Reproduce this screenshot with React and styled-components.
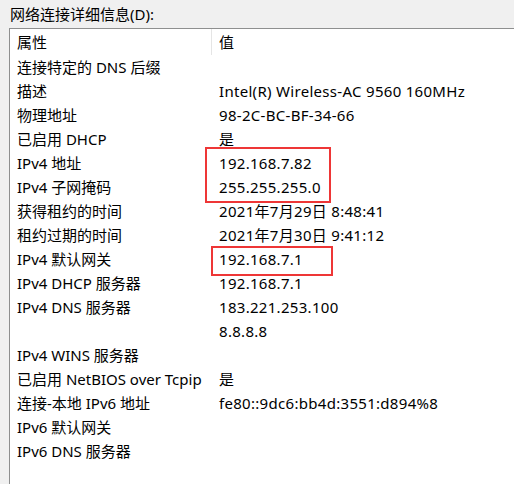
import React from "react";
import styled, { createGlobalStyle } from "styled-components";

const GlobalStyle = createGlobalStyle`
    html, body {
        margin: 0;
        padding: 0;
        background: #f0f0f0;
    }
    body {
        font-family: "Noto Sans", "Noto Sans CJK SC", sans-serif;
        font-size: 15px;
        color: #000;
    }
`;

const Window = styled.div`
    width: 514px;
    height: 484px;
    display: flex;
    flex-direction: column;
    overflow: hidden;
    background: #f0f0f0;
`;

const Caption = styled.div`
    height: 28px;
    padding-left: 10px;
    display: flex;
    align-items: center;
    line-height: 1;
`;

const ListBox = styled.div`
    flex: 1;
    margin-left: 9px;
    margin-right: -20px;
    border-left: 1px solid #8e8f8f;
    border-top: 1px solid #8e8f8f;
    background: #fff;
    position: relative;
`;

const Row = styled.div`
    display: grid;
    grid-template-columns: 202px 1fr;
    height: ${p => (p.$header ? "26px" : "24px")};
    align-items: center;
    white-space: nowrap;
`;

const Cell = styled.div`
    padding-left: 7px;
    line-height: 1;
    height: ${p => (p.$header ? "26px" : "auto")};
    display: flex;
    align-items: center;
    letter-spacing: ${p => (p.$value && !p.$header ? "0.3px" : "0")};
    border-right: ${p => (p.$header && !p.$value ? "1px solid #e5e5e5" : "none")};
    box-sizing: border-box;
`;

const Highlight = styled.div`
    position: absolute;
    border: 2px solid #ee3636;
    box-sizing: border-box;
    pointer-events: none;
`;

const rows = [
    ["连接特定的 DNS 后缀", ""],
    ["描述", "Intel(R) Wireless-AC 9560 160MHz"],
    ["物理地址", "98-2C-BC-BF-34-66"],
    ["已启用 DHCP", "是"],
    ["IPv4 地址", "192.168.7.82"],
    ["IPv4 子网掩码", "255.255.255.0"],
    ["获得租约的时间", "2021年7月29日 8:48:41"],
    ["租约过期的时间", "2021年7月30日 9:41:12"],
    ["IPv4 默认网关", "192.168.7.1"],
    ["IPv4 DHCP 服务器", "192.168.7.1"],
    ["IPv4 DNS 服务器", "183.221.253.100"],
    ["", "8.8.8.8"],
    ["IPv4 WINS 服务器", ""],
    ["已启用 NetBIOS over Tcpip", "是"],
    ["连接-本地 IPv6 地址", "fe80::9dc6:bb4d:3551:d894%8"],
    ["IPv6 默认网关", ""],
    ["IPv6 DNS 服务器", ""]
];

export default function App() {
    return (
        <Window>
            <GlobalStyle />
            <Caption>网络连接详细信息(D):</Caption>
            <ListBox>
                <Row $header>
                    <Cell $header>属性</Cell>
                    <Cell $header $value>值</Cell>
                </Row>
                {rows.map(([name, value], i) => (
                    <Row key={i}>
                        <Cell>{name}</Cell>
                        <Cell $value>{value}</Cell>
                    </Row>
                ))}
                <Highlight style={{ left: 195, top: 118, width: 126, height: 56 }} />
                <Highlight style={{ left: 201, top: 217, width: 122, height: 30 }} />
            </ListBox>
        </Window>
    );
}
